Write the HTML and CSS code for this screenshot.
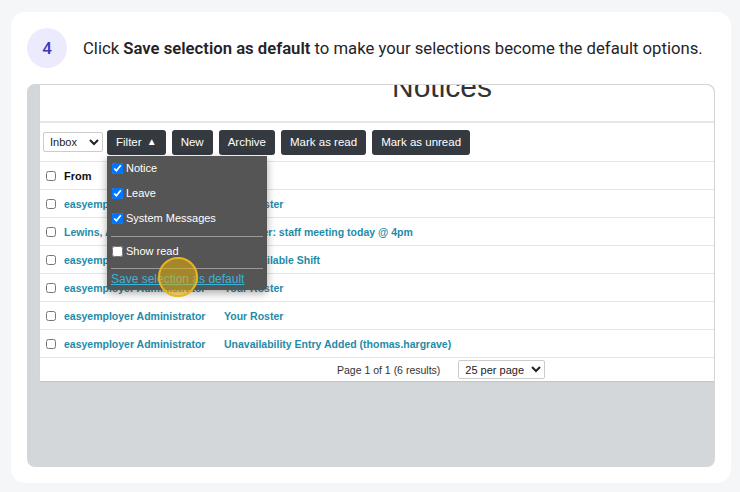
FILE: index.html
```html
<!DOCTYPE html>
<html lang="en">
<head>
    <meta charset="UTF-8">
    <meta name="viewport" content="width=device-width, initial-scale=1.0">
    <title>Notices - Step 4</title>
    <link rel="stylesheet" href="styles.css">
</head>
<body>

    <div class="card">
        <div class="step">
            <span class="badge">4</span>
            <p class="step-text">Click <b>Save selection as default</b> to make your selections become the default options.</p>
        </div>

        <div class="screen">
            <div class="panel">
                <div class="title-bar">
                    <h1>Notices</h1>
                </div>

                <div class="toolbar">
                    <select class="box-select inbox">
                        <option>Inbox</option>
                    </select>
                    <div class="filter-wrap">
                        <button class="btn">Filter <span class="caret">&#9650;</span></button>

                        <div class="dropdown">
                            <label class="opt"><input type="checkbox" checked> Notice</label>
                            <label class="opt"><input type="checkbox" checked> Leave</label>
                            <label class="opt"><input type="checkbox" checked> System Messages</label>
                            <hr>
                            <label class="opt"><input type="checkbox"> Show read</label>
                            <hr>
                            <a href="#" class="save-link">Save selection as default</a>
                            <span class="click-spot"></span>
                        </div>
                    </div>
                    <button class="btn">New</button>
                    <button class="btn">Archive</button>
                    <button class="btn">Mark as read</button>
                    <button class="btn">Mark as unread</button>
                </div>

                <div class="row head">
                    <input type="checkbox">
                    <span>From</span>
                    <span></span>
                </div>
                <div class="row">
                    <input type="checkbox">
                    <a href="#">easyemployer Administrator</a>
                    <a href="#">Your Roster</a>
                </div>
                <div class="row">
                    <input type="checkbox">
                    <a href="#">Lewins, Amy</a>
                    <a href="#">Reminder: staff meeting today @ 4pm</a>
                </div>
                <div class="row">
                    <input type="checkbox">
                    <a href="#">easyemployer Administrator</a>
                    <a href="#">New Available Shift</a>
                </div>
                <div class="row">
                    <input type="checkbox">
                    <a href="#">easyemployer Administrator</a>
                    <a href="#">Your Roster</a>
                </div>
                <div class="row">
                    <input type="checkbox">
                    <a href="#">easyemployer Administrator</a>
                    <a href="#">Your Roster</a>
                </div>
                <div class="row">
                    <input type="checkbox">
                    <a href="#">easyemployer Administrator</a>
                    <a href="#">Unavailability Entry Added (thomas.hargrave)</a>
                </div>

                <div class="pager">
                    <span>Page 1 of 1 (6 results)</span>
                    <select class="box-select per-page">
                        <option>25 per page</option>
                    </select>
                </div>
            </div>
        </div>
    </div>

</body>
</html>
```

FILE: styles.css
```css
body {
    margin: 0;
    padding: 12px 9px 9px 11px;
    background-color: #f5f6f8;
    font-family: Roboto, "Liberation Sans", sans-serif;
}
.card {
    width: 688px;
    padding: 16px;
    background-color: #fff;
    border-radius: 14px;
}
.step {
    display: flex;
    align-items: center;
    gap: 16px;
    height: 40px;
}
.badge {
    width: 40px;
    height: 40px;
    border-radius: 50%;
    background-color: #ecebfd;
    color: #3c35c5;
    font-size: 17px;
    font-weight: 500;
    display: flex;
    align-items: center;
    justify-content: center;
    flex-shrink: 0;
}
.step-text {
    margin: 0;
    font-size: 16.7px;
    color: #1f2328;
    white-space: nowrap;
}
.step-text b {
    font-weight: 600;
}
.screen {
    margin-top: 16px;
    height: 383px;
    background-color: #d3d7da;
    border-radius: 8px;
    padding: 1px 1px 0 13px;
    box-sizing: border-box;
    overflow: hidden;
}
.panel {
    background-color: #fff;
    border-top-right-radius: 8px;
    font-family: "Liberation Sans", Arial, sans-serif;
    font-size: 10.5px;
    overflow: hidden;
    box-shadow: 0 1px 1px rgba(0, 0, 0, 0.08);
}
.title-bar {
    display: flow-root;
    height: 36px;
    border-bottom: 2px solid #e4e6e8;
}
.title-bar h1 {
    margin: -15px 0 0 352px;
    font-size: 30px;
    line-height: 34px;
    font-weight: normal;
    color: #333;
}
.toolbar {
    height: 38px;
    display: flex;
    align-items: center;
    gap: 6px;
    padding-left: 3px;
    border-bottom: 1px solid #e2e4e6;
}
.box-select {
    height: 20px;
    border: 1px solid #ccc;
    border-radius: 2px;
    background-color: #fff;
    font-family: "Liberation Sans", Arial, sans-serif;
    font-size: 11px;
    color: #222;
    padding: 0 2px;
}
.inbox {
    width: 60px;
    margin-right: -2px;
}
.btn {
    height: 25px;
    padding: 0 9px;
    border: none;
    border-radius: 3px;
    background-color: #343a40;
    color: #fff;
    font-family: "Liberation Sans", Arial, sans-serif;
    font-size: 11.5px;
    cursor: pointer;
}
.caret {
    font-size: 10px;
    margin-left: 2px;
    vertical-align: 1px;
}
.filter-wrap {
    position: relative;
}
.dropdown {
    position: absolute;
    top: 26px;
    left: 0;
    width: 160px;
    height: 134px;
    box-sizing: border-box;
    padding: 0 4px;
    background-color: #555;
    border-radius: 0 0 4px 4px;
    box-shadow: 0 3px 8px rgba(0, 0, 0, 0.35);
    color: #fff;
    z-index: 5;
}
.opt {
    display: flex;
    align-items: center;
    gap: 3px;
    height: 25px;
    font-size: 11px;
}
.opt input {
    width: 11px;
    height: 11px;
    margin: 0 0 0 1px;
    accent-color: #0075ff;
}
.dropdown hr {
    margin: 4px 0 3px 0;
    border: none;
    border-top: 1px solid #999;
}
.opt + hr {
    margin: 5px 0 2px 0;
}
.opt + hr + .opt + hr {
    margin: 4px 0 3px 0;
}
.save-link {
    display: block;
    line-height: 14px;
    color: #38b4db;
    font-size: 12px;
}
.click-spot {
    position: absolute;
    left: 51px;
    top: 101px;
    width: 36px;
    height: 36px;
    border-radius: 50%;
    border: 2px solid #e8b420;
    background-color: rgba(232, 176, 10, 0.55);
}
.row {
    display: grid;
    grid-template-columns: 24px 160px 1fr;
    align-items: center;
    height: 27px;
    border-bottom: 1px solid #e2e4e6;
}
.row input {
    width: 10px;
    height: 10px;
    margin: 0 0 0 6px;
}
.row a {
    color: #1f8ba8;
    font-weight: bold;
    text-decoration: none;
}
.head span {
    font-weight: bold;
    font-size: 11px;
    color: #111;
}
.pager {
    height: 23px;
    display: flex;
    align-items: center;
    gap: 18px;
    padding-left: 297px;
    color: #333;
}
.per-page {
    width: 87px;
    height: 19px;
}
```
